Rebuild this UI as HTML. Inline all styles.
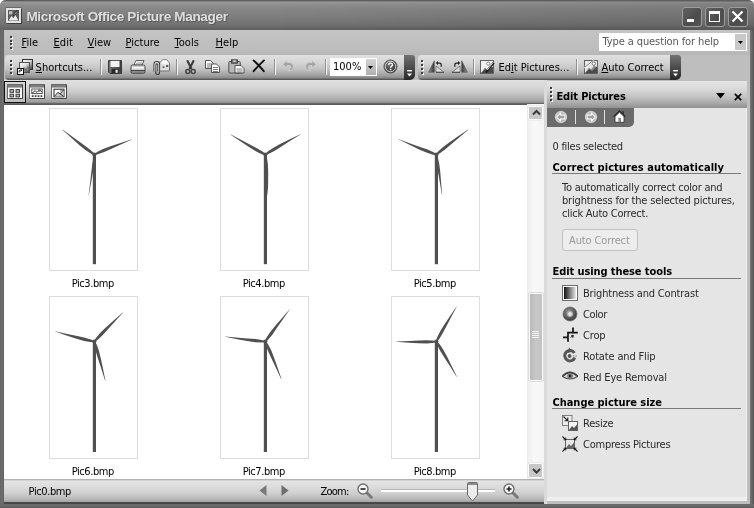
<!DOCTYPE html>
<html><head><meta charset="utf-8"><title>Microsoft Office Picture Manager</title>
<style>
html,body{margin:0;padding:0;}
body{width:754px;height:508px;overflow:hidden;position:relative;background:#fff;font-family:"DejaVu Sans Condensed","DejaVu Sans","Liberation Sans",sans-serif;font-size:11px;line-height:13px;color:#000;font-stretch:condensed;}
div,span,svg{position:absolute;white-space:nowrap;}
#app{left:0;top:0;width:754px;height:508px;overflow:hidden;filter:grayscale(1);}
u{text-decoration:underline;text-underline-offset:1px;}
.t{color:#000;}
.tb{top:55px;height:25px;border-radius:4px 0 0 4px;background:linear-gradient(#e0e0e0 0,#d5d5d5 30%,#c3c3c3 56%,#a2a2a2 80%,#8c8c8c 91%,#5c5c5c 97%,#555 100%);}
.cap{top:55px;height:25px;width:11px;border-radius:0 3px 5px 0;background:linear-gradient(#727272,#4c4c4c 50%,#282828 100%);}
.sep{top:59px;width:1px;height:16px;background:#8f8f8f;box-shadow:1px 0 0 #f4f4f4;}
.dot{width:2px;height:2px;background:#3c3c3c;box-shadow:1px 1px 0 #fff;}
.thumb{width:87px;height:161px;border:1px solid #dcdcdc;background:#fff;}
.lbl{width:120px;text-align:center;color:#000;}
.pt{color:#2a2a2a;}
.ph{font-weight:bold;color:#000;}
.hr{height:1px;background:#7a7a7a;left:552px;width:189px;}
.wb{top:6.6px;width:18px;height:18.2px;border:1px solid #9c9c9c;border-radius:3px;background:linear-gradient(135deg,#626262,#4c4c4c 60%,#565656);}
</style></head><body>
<div id="app">
<div style="left:0;top:0;width:754px;height:508px;background:#626262;border-radius:6px 6px 0 0;"></div>
<div style="left:0;top:0;width:754px;height:29.6px;border-radius:6px 6px 0 0;background:linear-gradient(#505050 0,#6c6c6c 1px,#9a9a9a 2px,#909090 4px,#868686 9px,#7c7c7c 18px,#717171 25px,#606060 29.6px);"></div>
<div style="left:0;top:1px;width:754px;height:28.6px;background:linear-gradient(90deg,rgba(0,0,0,0) 0,rgba(0,0,0,0) 35%,rgba(0,0,0,0.11) 100%);"></div>
<div style="left:6.4px;top:8.4px;width:11px;height:10.6px;border:2px solid #e4e4e4;background:#5c5c5c;box-shadow:1px 1px 0 #3c3c3c, 0 0 0 0.6px #555;"></div>
<svg style="left:8.4px;top:10.4px" width="11" height="11" viewBox="0 0 11 11"><rect x="1" y="1.2" width="3.4" height="3.2" fill="#bdbdbd"/><path d="M0.6 10.4 L3.4 6 L5.4 8.2 L7.4 5 L10.4 10.4Z" fill="#ededed"/><path d="M5.2 5.4 L9.6 0.8" stroke="#222" stroke-width="1.6"/><path d="M6.2 4.6 L9.2 1.4" stroke="#e8e8e8" stroke-width="0.7"/></svg>
<span style="left:26.4px;top:9.4px;font:bold 13.6px/16px 'Liberation Sans',sans-serif;color:#dedede;letter-spacing:-0.37px;text-shadow:1px 1px 0 #5c5c5c;">Microsoft Office Picture Manager</span>
<div class="wb" style="left:681.5px"></div>
<div class="wb" style="left:704.5px"></div>
<div class="wb" style="left:727.5px"></div>
<div style="left:687px;top:19px;width:7px;height:3px;background:#fff;"></div>
<div style="left:709px;top:11px;width:9px;height:7px;border:1px solid #fff;border-top:3px solid #fff;"></div>
<svg style="left:731px;top:9.8px" width="13" height="13" viewBox="0 0 13 13"><path d="M1.5 1.5 L11.5 11.5 M11.5 1.5 L1.5 11.5" stroke="#fff" stroke-width="2.2"/></svg>
<div style="left:4px;top:29.5px;width:746px;height:474.5px;background:#bebebe;"></div>
<div style="left:4px;top:29.5px;width:746px;height:25.5px;background:linear-gradient(#c4c4c4,#bcbcbc 80%,#b6b6b6);"></div>
<div class="dot" style="left:10px;top:36.0px"></div>
<div class="dot" style="left:10px;top:39.6px"></div>
<div class="dot" style="left:10px;top:43.2px"></div>
<div class="dot" style="left:10px;top:46.8px"></div>
<span class="t" style="left:21.6px;top:35.6px;"><u>F</u>ile</span>
<span class="t" style="left:53.6px;top:35.6px;"><u>E</u>dit</span>
<span class="t" style="left:87.6px;top:35.6px;"><u>V</u>iew</span>
<span class="t" style="left:125.6px;top:35.6px;"><u>P</u>icture</span>
<span class="t" style="left:174.6px;top:35.6px;"><u>T</u>ools</span>
<span class="t" style="left:215.6px;top:35.6px;"><u>H</u>elp</span>
<div style="left:599px;top:33px;width:148px;height:18px;background:#fff;"></div>
<div style="left:735px;top:34px;width:11px;height:16px;background:#c8c8c8;"></div>
<svg style="left:738px;top:41px" width="5" height="3" viewBox="0 0 5 3"><path d="M0 0H5L2.5 3Z" fill="#000"/></svg>
<span class="t" style="left:602.6px;top:34.8px;letter-spacing:-0.107px;color:#585858;">Type a question for help</span>
<div class="tb" style="left:5px;width:400px"></div><div class="cap" style="left:404px"></div>
<div class="tb" style="left:418px;width:253px"></div><div class="cap" style="left:670px"></div>
<div class="dot" style="left:10px;top:60.0px"></div>
<div class="dot" style="left:10px;top:64.0px"></div>
<div class="dot" style="left:10px;top:68.0px"></div>
<div class="dot" style="left:10px;top:72.0px"></div>
<div class="dot" style="left:421px;top:60.0px"></div>
<div class="dot" style="left:421px;top:64.0px"></div>
<div class="dot" style="left:421px;top:68.0px"></div>
<div class="dot" style="left:421px;top:72.0px"></div>
<div class="sep" style="left:100px"></div>
<div class="sep" style="left:176px"></div>
<div class="sep" style="left:274px"></div>
<div class="sep" style="left:325px"></div>
<div class="sep" style="left:473px"></div>
<div class="sep" style="left:576px"></div>
<span class="t" style="left:35.6px;top:61.4px;"><u>S</u>hortcuts...</span>
<span class="t" style="left:498.4px;top:61.4px;">Ed<u>i</u>t Pictures...</span>
<span class="t" style="left:601.4px;top:61.4px;"><u>A</u>uto Correct</span>
<svg style="left:407px;top:70px" width="6" height="8" viewBox="0 0 6 8"><rect x="0" y="0" width="5" height="1.4" fill="#fff"/><path d="M0 3.5H5L2.5 6.5Z" fill="#fff"/></svg>
<svg style="left:673px;top:70px" width="6" height="8" viewBox="0 0 6 8"><rect x="0" y="0" width="5" height="1.4" fill="#fff"/><path d="M0 3.5H5L2.5 6.5Z" fill="#fff"/></svg>
<div style="left:330px;top:58px;width:47px;height:18px;background:#fff;"></div>
<div style="left:366px;top:59px;width:10px;height:16px;background:linear-gradient(#d4d4d4,#b0b0b0);"></div>
<svg style="left:368px;top:66px" width="5" height="3" viewBox="0 0 5 3"><path d="M0 0H5L2.5 3Z" fill="#000"/></svg>
<span class="t" style="left:333px;top:60px;">100%</span>
<svg style="left:0;top:0" width="0" height="0"><defs><linearGradient id="gpic" x1="0" y1="0" x2="1" y2="1"><stop offset="0" stop-color="#fff"/><stop offset="0.45" stop-color="#ddd"/><stop offset="1" stop-color="#333"/></linearGradient><linearGradient id="gbw" x1="0" y1="0" x2="1" y2="0"><stop offset="0" stop-color="#111"/><stop offset="1" stop-color="#e8e8e8"/></linearGradient><linearGradient id="gtri" x1="0" y1="0" x2="1" y2="0"><stop offset="0" stop-color="#999"/><stop offset="1" stop-color="#333"/></linearGradient><radialGradient id="ghelp" cx="0.4" cy="0.35" r="0.7"><stop offset="0" stop-color="#777"/><stop offset="1" stop-color="#2a2a2a"/></radialGradient><radialGradient id="gdon" cx="0.4" cy="0.35" r="0.7"><stop offset="0" stop-color="#a8a8a8"/><stop offset="1" stop-color="#484848"/></radialGradient><linearGradient id="gsave" x1="0" y1="0" x2="1" y2="0"><stop offset="0" stop-color="#777"/><stop offset="1" stop-color="#3c3c3c"/></linearGradient></defs></svg>
<svg style="left:17px;top:59px" width="16" height="16" viewBox="0 0 16 16"><rect x="5.5" y="0.5" width="10" height="10" fill="url(#gpic)" stroke="#333"/><rect x="2.5" y="3.5" width="10" height="10" fill="url(#gpic)" stroke="#555"/><path d="M4 12 L7 8 L9 10 L11 7 L12 12Z" fill="#777"/><rect x="0.5" y="9.5" width="6" height="6" fill="#fff" stroke="#111"/><path d="M2.2 13.5 V12 Q2.2 11.2 3.5 11.2 H4.8 M3.6 10.2 L4.9 11.2 L3.6 12.3" fill="none" stroke="#111" stroke-width="1"/></svg>
<svg style="left:108px;top:60px" width="14" height="14" viewBox="0 0 14 14"><path d="M0.5 0.5 H13.5 V13.5 H2 L0.5 12Z" fill="url(#gsave)" stroke="#3a3a3a"/><rect x="2.5" y="0.8" width="9" height="6.2" fill="#f4f4f4"/><rect x="3.5" y="9" width="7" height="4.5" fill="#2a2a2a"/><rect x="7.5" y="9.8" width="2.2" height="3" fill="#e8e8e8"/></svg>
<svg style="left:130px;top:60px" width="16" height="14" viewBox="0 0 16 14"><path d="M4 5 L6 0.5 H14 L12 5Z" fill="#fff" stroke="#555" stroke-width="0.9"/><path d="M6.5 2.2H12.5M6 3.6H12" stroke="#999" stroke-width="0.7"/><path d="M1 6.5 Q1 5 2.5 5 H13.5 Q15 5 15 6.5 V10.5 H1Z" fill="#d0d0d0" stroke="#444" stroke-width="0.9"/><path d="M1 10.5 H15 V12 Q15 13.3 13.5 13.3 H2.5 Q1 13.3 1 12Z" fill="#8a8a8a" stroke="#444" stroke-width="0.9"/><rect x="2" y="7.2" width="12" height="1.2" fill="#fff"/></svg>
<svg style="left:153px;top:59px" width="17" height="16" viewBox="0 0 17 16"><path d="M6 4.8 L9.6 0.8 H13.8 L16.5 4.2 V12 H6Z" fill="#dcdcdc" stroke="#666" stroke-width="0.9"/><path d="M9.8 1.3 H13.6 L15.8 4 L12 5.4 L7.4 4Z" fill="#fafafa"/><rect x="9.6" y="7.4" width="1.8" height="1.5" fill="#555"/><rect x="13.2" y="6.2" width="2" height="1.8" fill="#444"/><path d="M1 12.5 V5.2 Q1 2.4 3.8 2.4 Q6.6 2.4 6.6 5.2 V13 Q6.6 15.4 4.6 15.4 Q2.7 15.4 2.7 13 V6.2 Q2.7 4.8 3.8 4.8 Q4.9 4.8 4.9 6.2 V12.5" fill="none" stroke="#333" stroke-width="1.05"/><path d="M1.9 12.5 V5.4 Q1.9 3.5 3.8 3.5 Q5.7 3.5 5.7 5.4 V13" fill="none" stroke="#e8e8e8" stroke-width="0.7"/></svg>
<svg style="left:185px;top:60px" width="11" height="15" viewBox="0 0 11 15"><path d="M2.2 0.3 L6.6 9 M8.8 0.3 L4.4 9" stroke="#3a3a3a" stroke-width="2.1" fill="none"/><circle cx="2.8" cy="11.5" r="2" fill="none" stroke="#444" stroke-width="1.5"/><circle cx="8.2" cy="11.5" r="2" fill="none" stroke="#444" stroke-width="1.5"/></svg>
<svg style="left:205px;top:60px" width="16" height="13" viewBox="0 0 16 13"><path d="M0.5 0.5 H5.5 L8.5 3.5 V8.5 H0.5Z" fill="#fff" stroke="#444" stroke-width="0.9"/><path d="M2 4H7" stroke="#555" stroke-width="0.8"/><path d="M2 6H7" stroke="#555" stroke-width="0.8"/><path d="M2 8H7" stroke="#555" stroke-width="0.8"/><path d="M6.5 4.0 H11.5 L14.5 7.0 V12.5 H6.5Z" fill="#fff" stroke="#444" stroke-width="0.9"/><path d="M8 7.5H13" stroke="#555" stroke-width="0.8"/><path d="M8 9.5H13" stroke="#555" stroke-width="0.8"/><path d="M8 11.5H13" stroke="#555" stroke-width="0.8"/></svg>
<svg style="left:228px;top:59px" width="17" height="15" viewBox="0 0 17 15"><rect x="0.8" y="2.5" width="11.5" height="11.5" rx="1" fill="#b8b8b8" stroke="#444" stroke-width="0.9"/><rect x="3.5" y="0.8" width="6" height="3.4" fill="#777" stroke="#333" stroke-width="0.8"/><rect x="5.3" y="1.4" width="2.4" height="1.4" fill="#e8e8e8"/><path d="M7.0 6.5 H13.0 L16.0 9.5 V14.0 H7.0Z" fill="#fff" stroke="#444" stroke-width="0.9"/><path d="M8.5 10H14.5" stroke="#555" stroke-width="0.8"/><path d="M8.5 12H14.5" stroke="#555" stroke-width="0.8"/><path d="M8.5 14H14.5" stroke="#555" stroke-width="0.8"/></svg>
<svg style="left:252px;top:59px" width="14" height="14" viewBox="0 0 14 14"><path d="M1.6 1.6 Q6 5 11.8 12.2 M12 1.4 Q7 6 1.6 12.2" stroke="#111" stroke-width="1.9" fill="none" stroke-linecap="round"/></svg>
<svg style="left:282px;top:60px" width="12" height="12" viewBox="0 0 12 12"><path d="M0.8 4.2 L5 0.6 V2.6 H7.5 Q11.4 2.6 11.4 6.4 Q11.4 10.2 6.8 11 Q8.6 9 8.6 6.8 Q8.6 5.6 7.2 5.6 H5 V7.8Z" fill="#a4a4a4" stroke="#d6d6d6" stroke-width="0.7"/></svg>
<svg style="left:305px;top:60px" width="12" height="12" viewBox="0 0 12 12"><g transform="translate(12 0) scale(-1 1)"><path d="M0.8 4.2 L5 0.6 V2.6 H7.5 Q11.4 2.6 11.4 6.4 Q11.4 10.2 6.8 11 Q8.6 9 8.6 6.8 Q8.6 5.6 7.2 5.6 H5 V7.8Z" fill="#a4a4a4" stroke="#d6d6d6" stroke-width="0.7"/></g></svg>
<svg style="left:383px;top:59px" width="15" height="15" viewBox="0 0 15 15"><circle cx="7.5" cy="7.5" r="6.6" fill="url(#ghelp)" stroke="#555" stroke-width="0.8"/><circle cx="7.5" cy="7.5" r="5.3" fill="none" stroke="#ececec" stroke-width="0.9"/><path d="M5.6 6 Q5.6 4.2 7.6 4.2 Q9.5 4.2 9.5 5.8 Q9.5 6.8 8.4 7.4 Q7.6 7.9 7.6 8.8" fill="none" stroke="#fff" stroke-width="1.3"/><rect x="6.9" y="9.8" width="1.4" height="1.4" fill="#fff"/></svg>
<svg style="left:428px;top:60px" width="17" height="13" viewBox="0 0 17 13"><path d="M6.3 0.8 V12.3 H0.5Z" fill="url(#gtri)" stroke="#555" stroke-width="0.6"/><path d="M8 12.3 V6 L16 12.3Z" fill="#dedede" stroke="#6a6a6a" stroke-width="0.8"/><path d="M8 12.3H16" stroke="#444" stroke-width="0.9"/><path d="M13.2 6.8 V4.6 Q13.2 3 11.6 3 H9.6" fill="none" stroke="#222" stroke-width="1.25"/><path d="M10 1 V5 L7.7 3Z" fill="#222"/></svg>
<svg style="left:451px;top:60px" width="17" height="13" viewBox="0 0 17 13"><g transform="translate(17 0) scale(-1 1)"><path d="M6.3 0.8 V12.3 H0.5Z" fill="url(#gtri)" stroke="#555" stroke-width="0.6"/><path d="M8 12.3 V6 L16 12.3Z" fill="#dedede" stroke="#6a6a6a" stroke-width="0.8"/><path d="M8 12.3H16" stroke="#444" stroke-width="0.9"/><path d="M13.2 6.8 V4.6 Q13.2 3 11.6 3 H9.6" fill="none" stroke="#222" stroke-width="1.25"/><path d="M10 1 V5 L7.7 3Z" fill="#222"/></g></svg>
<svg style="left:480px;top:60px" width="15" height="14" viewBox="0 0 15 14"><rect x="0.5" y="0.5" width="13" height="13" fill="#f2f2f2" stroke="#555" stroke-width="0.9"/><path d="M1 13 L5 7.5 L7 9.5 L10.5 5 L13 8 V13Z" fill="#888"/><path d="M1 13 L5.5 9 L8 11 L13 6.5 V13Z" fill="#4a4a4a"/><circle cx="8.2" cy="3.6" r="1.6" fill="#fff" stroke="#777" stroke-width="0.8"/><path d="M13.8 2.5 L7 11.2 L5.8 12.6" stroke="#222" stroke-width="2.2" fill="none"/><path d="M13.3 2.2 L7.3 10" stroke="#ddd" stroke-width="0.9"/></svg>
<svg style="left:584px;top:59px" width="15" height="15" viewBox="0 0 15 15"><rect x="0.5" y="1.5" width="13" height="13" fill="#e8e8e8" stroke="#555" stroke-width="0.9"/><path d="M1 14 L5 8.5 L7 10.5 L10.5 6 L13 9 V14Z" fill="#8a8a8a"/><path d="M1 14 L5.5 10 L8 12 L13 7.5 V14Z" fill="#4a4a4a"/><path d="M0.5 9 L10 1.5" stroke="#fff" stroke-width="1.6"/><path d="M0.8 8.2 L9.6 1.2" stroke="#444" stroke-width="0.7"/><circle cx="9.8" cy="4.6" r="1.7" fill="#fff" stroke="#555" stroke-width="0.8"/></svg>
<div style="left:4px;top:80px;width:540px;height:25px;background:linear-gradient(#e0e0e0 0,#d9d9d9 6px,#cbcbcb 12px,#b2b2b2 18px,#9c9c9c 22px,#828282 23px,#4c4c4c 24px,#6a6a6a 25px);"></div>
<div style="left:4px;top:81px;width:20px;height:20px;border:1px solid #111;background:linear-gradient(#d8d8d8,#bdbdbd);"></div>
<svg style="left:7px;top:84px" width="16" height="15" viewBox="0 0 16 15"><rect x="0.5" y="0.5" width="15" height="14" fill="#fafafa" stroke="#6a6a6a"/><rect x="1" y="1" width="14" height="2.6" fill="#7c7c7c"/><path d="M1 14.5H15.5V1" stroke="#444" fill="none"/><rect x="3" y="5.6" width="3.6" height="2.7" fill="#b4b4b4" stroke="#333" stroke-width="0.9"/><rect x="3" y="10.2" width="3.6" height="2.7" fill="#b4b4b4" stroke="#333" stroke-width="0.9"/><rect x="9" y="5.6" width="3.6" height="2.7" fill="#b4b4b4" stroke="#333" stroke-width="0.9"/><rect x="9" y="10.2" width="3.6" height="2.7" fill="#b4b4b4" stroke="#333" stroke-width="0.9"/></svg>
<svg style="left:29px;top:84px" width="16" height="15" viewBox="0 0 16 15"><rect x="0.5" y="0.5" width="15" height="14" fill="#fafafa" stroke="#6a6a6a"/><rect x="1" y="1" width="14" height="2.6" fill="#7c7c7c"/><path d="M1 14.5H15.5V1" stroke="#444" fill="none"/><rect x="2.8" y="5" width="10.4" height="4.6" fill="#fff" stroke="#444" stroke-width="0.9"/><path d="M3.2 9.2 L6 6.6 L8 8.4 L10.6 5.8 L12.8 8" stroke="#333" fill="none" stroke-width="1"/><circle cx="10.4" cy="6.6" r="0.9" fill="none" stroke="#444" stroke-width="0.6"/><rect x="2.8" y="11.2" width="1.8" height="1.8" fill="#4a4a4a"/><rect x="5.7" y="11.2" width="1.8" height="1.8" fill="#4a4a4a"/><rect x="8.6" y="11.2" width="1.8" height="1.8" fill="#4a4a4a"/><rect x="11.5" y="11.2" width="1.8" height="1.8" fill="#4a4a4a"/></svg>
<svg style="left:51px;top:84px" width="16" height="15" viewBox="0 0 16 15"><rect x="0.5" y="0.5" width="15" height="14" fill="#fafafa" stroke="#6a6a6a"/><rect x="1" y="1" width="14" height="2.6" fill="#7c7c7c"/><path d="M1 14.5H15.5V1" stroke="#444" fill="none"/><rect x="3" y="5.2" width="10" height="7.6" fill="#fff" stroke="#3a3a3a" stroke-width="1.1"/><path d="M3.4 12.4 L7 8.2 L9 10 L12.6 6 V12.4Z" fill="#c8c8c8"/><path d="M3.4 12.4 L7 8.2 L9 10 L12.6 6 M8.4 9.4 L12.6 12.4" fill="none" stroke="#333" stroke-width="1"/><circle cx="10.6" cy="7" r="1" fill="#ddd" stroke="#555" stroke-width="0.6"/></svg>
<div style="left:4px;top:104.6px;width:524px;height:375px;background:#fff;"></div>
<div style="left:527px;top:104px;width:17px;height:376px;background:linear-gradient(90deg,#ededed,#f8f8f8 40%,#f4f4f4);"></div>
<div style="left:528.4px;top:105.6px;width:12.6px;height:12.6px;border:1px solid #fbfbfb;border-radius:2px;background:#c8c8c8;box-shadow:0 0 0 0.6px #e4e4e4;"></div>
<svg style="left:531.5px;top:109.1px" width="9" height="8" viewBox="0 0 9 8"><path d="M1 5.5 L4.5 2 L8 5.5" stroke="#3a3a3a" stroke-width="2" fill="none"/></svg>
<div style="left:528.4px;top:463.2px;width:12.6px;height:12.6px;border:1px solid #fbfbfb;border-radius:2px;background:#c8c8c8;box-shadow:0 0 0 0.6px #e4e4e4;"></div>
<svg style="left:531.5px;top:466.7px" width="9" height="8" viewBox="0 0 9 8"><path d="M1 2 L4.5 5.5 L8 2" stroke="#3a3a3a" stroke-width="2" fill="none"/></svg>
<div style="left:529px;top:293px;width:12px;height:86px;border:1px solid #fafafa;border-radius:2px;background:linear-gradient(90deg,#b8b8b8,#c8c8c8 50%,#c2c2c2);box-shadow:0 0 0 1px #dcdcdc;"></div>
<div style="left:532px;top:331px;width:7px;height:1px;background:#f4f4f4;"></div>
<div style="left:532px;top:333px;width:7px;height:1px;background:#f4f4f4;"></div>
<div style="left:532px;top:335px;width:7px;height:1px;background:#f4f4f4;"></div>
<div style="left:532px;top:337px;width:7px;height:1px;background:#f4f4f4;"></div>
<div class="thumb" style="left:49px;top:108px"></div>
<svg style="left:49px;top:108px" width="90" height="164" viewBox="0 0 90 164" fill="#505050"><rect x="43.8" y="45.6" width="3.2" height="110.6"/><circle cx="45.4" cy="46.6" r="2"/><polygon points="45.1,46.0 48.5,43.7 54.0,41.1 61.5,38.3 70.0,35.5 82.9,31.3 83.0,31.6 70.7,37.0 62.5,40.8 55.2,44.1 49.5,46.1 45.7,47.2"/><polygon points="45.0,47.2 41.3,45.3 36.4,41.9 30.2,36.9 23.4,30.8 13.4,21.8 13.6,21.5 24.5,29.5 31.8,34.7 38.3,39.4 42.9,43.3 45.8,46.0"/><polygon points="45.8,46.7 45.7,50.7 45.1,56.7 43.9,64.6 42.3,73.4 39.9,86.7 39.6,86.7 41.3,73.3 42.3,64.3 43.2,56.4 44.2,50.5 45.0,46.5"/></svg>
<span class="t" style="left:71.8px;top:276.8px;letter-spacing:-0.454px;">Pic3.bmp</span>
<div class="thumb" style="left:220px;top:108px"></div>
<svg style="left:220px;top:108px" width="90" height="164" viewBox="0 0 90 164" fill="#505050"><rect x="43.8" y="45.6" width="3.2" height="110.6"/><circle cx="45.4" cy="46.6" r="2"/><polygon points="45.0,46.0 48.1,43.3 53.1,40.0 60.1,36.1 68.2,32.1 80.4,26.2 80.5,26.5 69.1,33.6 61.5,38.5 54.7,42.7 49.4,45.6 45.8,47.2"/><polygon points="45.0,47.2 41.2,45.9 35.8,43.2 29.0,39.1 21.5,34.1 10.3,26.5 10.4,26.2 22.3,32.6 30.3,36.7 37.4,40.5 42.5,43.6 45.8,46.0"/><polygon points="46.1,46.6 47.1,50.5 47.9,56.5 48.2,64.5 48.1,73.5 48.0,87.0 47.7,87.0 46.4,73.6 45.5,64.6 44.7,56.7 44.5,50.7 44.7,46.6"/></svg>
<span class="t" style="left:242.8px;top:276.8px;letter-spacing:-0.454px;">Pic4.bmp</span>
<div class="thumb" style="left:391px;top:108px"></div>
<svg style="left:391px;top:108px" width="90" height="164" viewBox="0 0 90 164" fill="#505050"><rect x="43.8" y="45.6" width="3.2" height="110.6"/><circle cx="45.4" cy="46.6" r="2"/><polygon points="45.0,46.0 47.6,43.0 52.1,38.9 58.5,34.2 66.0,29.1 77.2,21.5 77.4,21.8 67.0,30.4 60.2,36.3 54.1,41.5 49.2,45.0 45.8,47.2"/><polygon points="45.1,47.2 41.1,46.5 35.4,44.6 28.1,41.4 20.0,37.5 7.8,31.6 7.9,31.3 20.6,35.9 29.1,38.9 36.6,41.6 42.1,44.1 45.7,46.0"/><polygon points="46.0,46.5 47.1,50.4 48.3,56.3 49.3,64.2 50.0,73.2 51.2,86.7 50.9,86.7 48.7,73.4 47.1,64.5 45.8,56.6 45.1,50.7 44.8,46.7"/></svg>
<span class="t" style="left:413.8px;top:276.8px;letter-spacing:-0.454px;">Pic5.bmp</span>
<div class="thumb" style="left:49px;top:296px"></div>
<svg style="left:49px;top:296px" width="90" height="164" viewBox="0 0 90 164" fill="#505050"><rect x="43.8" y="44.6" width="3.2" height="111.4"/><circle cx="45.4" cy="45.6" r="2"/><polygon points="44.9,45.1 47.1,41.7 51.1,37.1 56.8,31.6 63.5,25.6 73.7,16.6 73.9,16.8 64.8,26.8 58.7,33.5 53.3,39.4 49.0,43.5 45.9,46.1"/><polygon points="45.2,46.3 41.2,46.1 35.2,44.9 27.5,42.7 19.0,39.9 6.2,35.6 6.2,35.3 19.4,38.3 28.2,40.1 36.0,41.8 41.8,43.5 45.6,44.9"/><polygon points="46.1,45.4 47.9,49.1 49.9,54.7 51.8,62.5 53.7,71.3 56.4,84.6 56.1,84.7 52.0,71.8 49.2,63.2 46.8,55.6 45.4,49.7 44.7,45.8"/></svg>
<span class="t" style="left:71.8px;top:464.8px;letter-spacing:-0.454px;">Pic6.bmp</span>
<div class="thumb" style="left:220px;top:296px"></div>
<svg style="left:220px;top:296px" width="90" height="164" viewBox="0 0 90 164" fill="#505050"><rect x="43.8" y="44.6" width="3.2" height="111.4"/><circle cx="45.4" cy="45.6" r="2"/><polygon points="44.8,45.2 46.6,41.5 49.9,36.5 54.9,30.2 60.8,23.4 69.7,13.2 69.9,13.3 62.1,24.4 57.0,31.8 52.5,38.4 48.7,43.1 46.0,46.0"/><polygon points="45.3,46.3 41.2,46.6 35.2,46.3 27.3,45.1 18.5,43.4 5.2,40.8 5.2,40.5 18.7,41.7 27.7,42.4 35.6,43.1 41.6,44.0 45.5,44.9"/><polygon points="46.0,45.3 48.3,48.7 51.1,54.1 54.0,61.5 57.0,70.0 61.4,82.8 61.1,82.9 55.4,70.7 51.5,62.6 48.1,55.3 46.0,49.7 44.8,45.9"/></svg>
<span class="t" style="left:242.8px;top:464.8px;letter-spacing:-0.454px;">Pic7.bmp</span>
<div class="thumb" style="left:391px;top:296px"></div>
<svg style="left:391px;top:296px" width="90" height="164" viewBox="0 0 90 164" fill="#505050"><rect x="43.8" y="44.6" width="3.2" height="111.4"/><circle cx="45.4" cy="45.6" r="2"/><polygon points="44.8,45.2 46.1,41.4 48.8,36.0 52.9,29.2 57.9,21.7 65.5,10.5 65.8,10.6 59.4,22.5 55.3,30.5 51.5,37.6 48.4,42.7 46.0,46.0"/><polygon points="45.4,46.3 41.4,47.1 35.4,47.5 27.4,47.3 18.4,46.7 4.9,45.7 4.9,45.4 18.4,45.0 27.4,44.6 35.4,44.3 41.4,44.5 45.4,44.9"/><polygon points="46.0,45.2 48.7,48.3 52.0,53.3 55.9,60.3 59.9,68.4 65.8,80.6 65.5,80.7 58.4,69.3 53.5,61.7 49.3,54.9 46.4,49.6 44.8,46.0"/></svg>
<span class="t" style="left:413.8px;top:464.8px;letter-spacing:-0.454px;">Pic8.bmp</span>
<div style="left:4px;top:479.4px;width:540px;height:25.1px;background:linear-gradient(#a2a2a2 0,#e4e4e4 2px,#dcdcdc 8px,#cdcdcd 15px,#b4b4b4 21px,#a4a4a4 22.6px,#4a4a4a 23.2px,#444 25.1px);"></div>
<span class="t" style="left:28.6px;top:485px;letter-spacing:-0.397px;">Pic0.bmp</span>
<span class="t" style="left:320.6px;top:485px;letter-spacing:-0.794px;">Zoom:</span>
<svg style="left:259px;top:485px" width="8" height="11" viewBox="0 0 8 11"><path d="M7.5 0 V11 L0.5 5.5Z" fill="#787878"/></svg>
<svg style="left:281px;top:485px" width="8" height="11" viewBox="0 0 8 11"><path d="M0.5 0 V11 L7.5 5.5Z" fill="#6e6e6e"/></svg>
<div style="left:381px;top:490px;width:114px;height:2px;background:#fff;box-shadow:0 -1px 0 #b8b8b8;"></div>
<svg style="left:467px;top:482px" width="11" height="20" viewBox="0 0 11 20"><path d="M0.5 1.5 Q0.5 0.5 1.5 0.5 H9.5 Q10.5 0.5 10.5 1.5 V13 L5.5 19 L0.5 13Z" fill="#ececec" stroke="#6a6a6a"/><rect x="1" y="1" width="9" height="2" fill="#8a8a8a"/></svg>
<svg style="left:357px;top:483px" width="17" height="17" viewBox="0 0 17 17"><path d="M10 10 L14.3 14.3" stroke="#7a7a7a" stroke-width="3" stroke-linecap="round"/><circle cx="6" cy="6" r="5" fill="#f6f6f6" stroke="#707070" stroke-width="1.4"/><path d="M3.5 6H8.5" stroke="#222" stroke-width="1.6"/></svg>
<svg style="left:503px;top:483px" width="17" height="17" viewBox="0 0 17 17"><path d="M10 10 L14.3 14.3" stroke="#7a7a7a" stroke-width="3" stroke-linecap="round"/><circle cx="6" cy="6" r="5" fill="#f6f6f6" stroke="#707070" stroke-width="1.4"/><path d="M3.5 6H8.5M6 3.5V8.5" stroke="#222" stroke-width="1.6"/></svg>
<div style="left:544px;top:80px;width:3px;height:424px;background:#dadada;"></div>
<div style="left:547px;top:82px;width:200px;height:419px;background:#efefef;"></div>
<div style="left:547px;top:82px;width:199px;height:415px;background:#e5e5e5;"></div>
<div style="left:547px;top:81px;width:200px;height:27px;background:linear-gradient(#e6e6e6 0,#d9d9d9 30%,#c2c2c2 60%,#a2a2a2 88%,#909090 100%);"></div>
<div style="left:547px;top:108px;width:199px;height:8px;background:#e5e5e5;border-radius:0 5px 0 0;"></div>
<div class="dot" style="left:550px;top:87.0px"></div>
<div class="dot" style="left:550px;top:91.0px"></div>
<div class="dot" style="left:550px;top:95.0px"></div>
<div class="dot" style="left:550px;top:99.0px"></div>
<span class="ph" style="left:556.5px;top:90px;letter-spacing:-0.157px;">Edit Pictures</span>
<svg style="left:716px;top:93px" width="9" height="6" viewBox="0 0 9 6"><path d="M0 0H9L4.5 5.5Z" fill="#000"/></svg>
<svg style="left:734px;top:93px" width="8" height="8" viewBox="0 0 8 8"><path d="M0.8 0.8L7.2 7.2M7.2 0.8L0.8 7.2" stroke="#000" stroke-width="1.7"/></svg>
<div style="left:547px;top:108px;width:87px;height:19px;background:#6b6b6b;border-radius:0 0 5px 0;"></div>
<div style="left:575px;top:110px;width:1px;height:14px;background:#e0e0e0;"></div>
<div style="left:604px;top:110px;width:1px;height:14px;background:#e0e0e0;"></div>
<svg style="left:553px;top:109px" width="16" height="16" viewBox="-8 -8 16 16"><circle r="6.4" fill="#858585"/><circle r="5.4" fill="#b4b4b4" stroke="#d6d6d6" stroke-width="1.2"/><path d="M-4.4 0 L-0.4 -4.2 V-1.9 H3.8 V1.9 H-0.4 V4.2Z" transform="translate(0 0)" fill="#9c9c9c" stroke="#f6f6f6" stroke-width="1.1" stroke-linejoin="round"/></svg>
<svg style="left:582.5px;top:109px" width="16" height="16" viewBox="-8 -8 16 16"><circle r="6.4" fill="#858585"/><circle r="5.4" fill="#b4b4b4" stroke="#d6d6d6" stroke-width="1.2"/><path d="M-4.4 0 L-0.4 -4.2 V-1.9 H3.8 V1.9 H-0.4 V4.2Z" transform="translate(0 0) scale(-1,1)" fill="#9c9c9c" stroke="#f6f6f6" stroke-width="1.1" stroke-linejoin="round"/></svg>
<svg style="left:612.5px;top:110px" width="13" height="13" viewBox="0 0 13 13"><path d="M0.6 6.6 L6.5 0.9 L12.4 6.6" fill="none" stroke="#222" stroke-width="1.2"/><path d="M2 6.6 L6.5 2.2 L11 6.6 V12.3 H2Z" fill="#fff" stroke="#2a2a2a" stroke-width="0.8"/><rect x="5.4" y="7.8" width="2.6" height="4.4" fill="#8a8a8a"/><rect x="9.4" y="1.2" width="1.5" height="2.8" fill="#333"/></svg>
<span class="pt" style="left:552.5px;top:140px;letter-spacing:-0.266px;">0 files selected</span>
<span class="ph" style="left:552.5px;top:161px;letter-spacing:0.060px;">Correct pictures automatically</span>
<div class="hr" style="top:173px"></div>
<span class="pt" style="left:562px;top:181px;letter-spacing:-0.220px;">To automatically correct color and</span>
<span class="pt" style="left:562px;top:194px;letter-spacing:-0.174px;">brightness for the selected pictures,</span>
<span class="pt" style="left:562px;top:207px;letter-spacing:-0.239px;">click Auto Correct.</span>
<div style="left:562px;top:229px;width:74px;height:20px;border:1px solid #c2c2c2;border-radius:3px;background:#ededed;"></div>
<span class="pt" style="left:569px;top:234px;letter-spacing:-0.126px;color:#9a9a9a;">Auto Correct</span>
<span class="ph" style="left:552.5px;top:265px;letter-spacing:-0.089px;">Edit using these tools</span>
<div class="hr" style="top:278px"></div>
<span class="pt" style="left:583px;top:287px;letter-spacing:-0.187px;">Brightness and Contrast</span>
<span class="pt" style="left:583px;top:308px;letter-spacing:-0.386px;">Color</span>
<span class="pt" style="left:583px;top:329px;letter-spacing:-0.159px;">Crop</span>
<span class="pt" style="left:583px;top:350px;letter-spacing:-0.152px;">Rotate and Flip</span>
<span class="pt" style="left:583px;top:371px;letter-spacing:-0.148px;">Red Eye Removal</span>
<span class="ph" style="left:552.5px;top:396px;letter-spacing:-0.038px;">Change picture size</span>
<div class="hr" style="top:408px"></div>
<span class="pt" style="left:583px;top:417px;letter-spacing:-0.214px;">Resize</span>
<span class="pt" style="left:583px;top:437.6px;letter-spacing:-0.238px;">Compress Pictures</span>
<svg style="left:562px;top:285px" width="16" height="16" viewBox="0 0 16 16"><rect x="0.5" y="0.5" width="15" height="15" fill="#fff" stroke="#6a6a6a"/><rect x="2" y="2" width="12" height="12" fill="url(#gbw)"/></svg>
<svg style="left:562px;top:306px" width="16" height="16" viewBox="0 0 16 16"><circle cx="8" cy="8" r="4.9" fill="none" stroke="url(#gdon)" stroke-width="4.2"/><circle cx="8" cy="8" r="7" fill="none" stroke="#6a6a6a" stroke-width="0.7"/><circle cx="8" cy="8" r="2.5" fill="#e6e6e6" stroke="#777" stroke-width="0.6"/></svg>
<svg style="left:562px;top:327px" width="16" height="16" viewBox="0 0 16 16"><path d="M1 10.3 H6 M6 14.8 V5.6 H15.8 M11 0.5 V5.6" stroke="#111" stroke-width="1.7" fill="none"/><path d="M6 10.3 H11 V5.6" stroke="#555" stroke-width="0.8" fill="none" stroke-dasharray="1 1.2"/><rect x="9.3" y="8" width="2.3" height="2.3" fill="#222"/></svg>
<svg style="left:562px;top:347px" width="16" height="16" viewBox="0 0 16 16"><path d="M12.4 6 A5.2 5.2 0 1 0 12.8 10.6" fill="none" stroke="#585858" stroke-width="3"/><path d="M6 1 L10.5 3.8 L6 6.8Z" fill="#555" transform="rotate(20 8 4)"/><circle cx="7.6" cy="9" r="1.9" fill="#555"/><path d="M11 9H15" stroke="#777" stroke-width="1" stroke-dasharray="1.4 1"/></svg>
<svg style="left:562px;top:371px" width="16" height="10" viewBox="0 0 16 10"><path d="M0.5 5.5 Q8 -2.5 15.5 5.5 Q8 10.5 0.5 5.5Z" fill="#dcdcdc" stroke="#555" stroke-width="1.1"/><path d="M0.5 5.2 Q8 -2.5 15.5 5.2" fill="none" stroke="#444" stroke-width="1.7"/><circle cx="8" cy="5" r="2.8" fill="#777"/><circle cx="8" cy="5" r="1.2" fill="#222"/></svg>
<svg style="left:562px;top:415px" width="16" height="16" viewBox="0 0 16 16"><rect x="0.5" y="0.5" width="9.5" height="10" fill="#ededed" stroke="#777" stroke-width="0.9"/><path d="M1.5 1.5 L5.5 5.5 M5.8 2.6 V5.8 H2.6" stroke="#222" stroke-width="1.1" fill="none"/><rect x="6.5" y="6.5" width="9" height="9" fill="#f6f6f6" stroke="#555" stroke-width="0.9"/><path d="M7 15 L10 11 L12 13 L15 9.5 V15Z" fill="#555"/></svg>
<svg style="left:562px;top:436px" width="16" height="16" viewBox="0 0 16 16"><rect x="3.5" y="3.5" width="9" height="9" fill="#e8e8e8" stroke="#555" stroke-width="0.9"/><path d="M4 12 L7 8 L9 10 L12 6.5 V12Z" fill="#666"/><path d="M0.5 0.5 L3.6 3.6 M15.5 0.5 L12.4 3.6 M0.5 15.5 L3.6 12.4 M15.5 15.5 L12.4 12.4" stroke="#111" stroke-width="1.1"/><path d="M1.6 3.8 H3.8 V1.6 M14.4 3.8 H12.2 V1.6 M1.6 12.2 H3.8 V14.4 M14.4 12.2 H12.2 V14.4" stroke="#111" stroke-width="0.9" fill="none"/></svg>
<div style="left:0;top:29px;width:4px;height:479px;background:linear-gradient(90deg,#666,#6e6e6e 70%,#5c5c5c);"></div>
<div style="left:750px;top:30px;width:4px;height:478px;background:linear-gradient(90deg,#747474,#666 50%,#505050);"></div>
<div style="left:0;top:504px;width:754px;height:4px;background:linear-gradient(#666,#6c6c6c 40%,#5a5a5a);"></div>
</div>
</body></html>
